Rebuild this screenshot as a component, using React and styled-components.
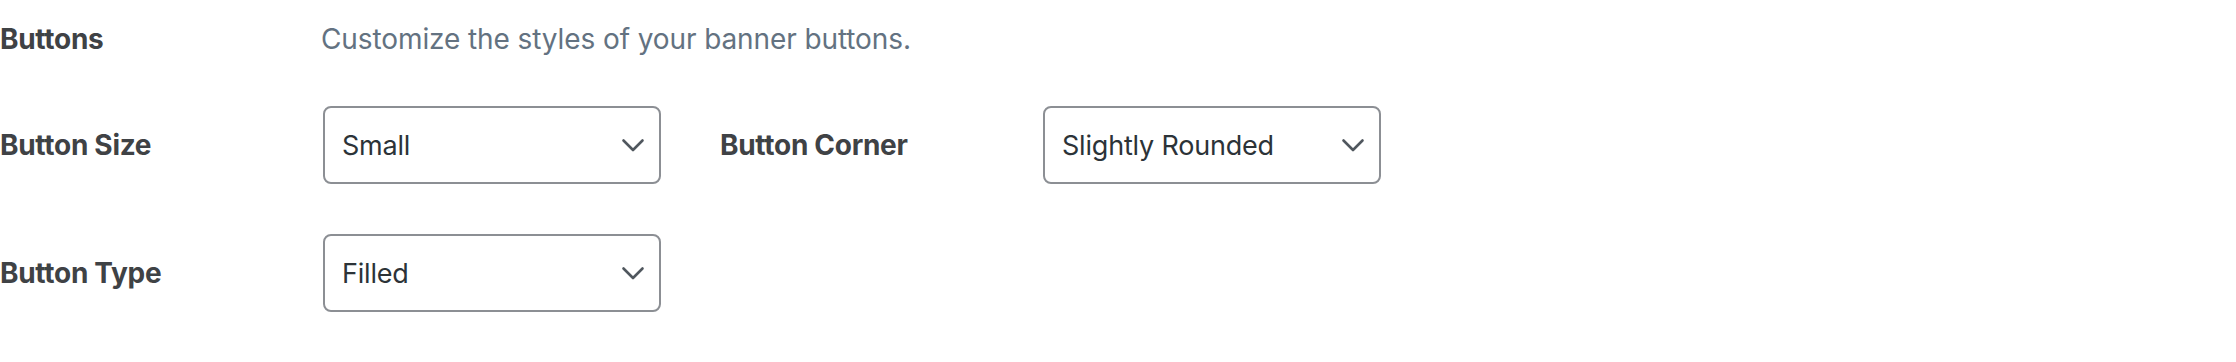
import React from 'react';
import styled, { createGlobalStyle } from 'styled-components';

const GlobalStyle = createGlobalStyle`
    body {
        margin: 0;
        background: #ffffff;
        font-family: Inter, "Noto Sans", "Liberation Sans", sans-serif;
    }
`;

const Section = styled.div`
    display: flex;
    flex-direction: column;
    width: 2236px;
`;

const HeadRow = styled.div`
    display: flex;
    align-items: center;
    height: 78px;
`;

const Row = styled.div`
    display: flex;
    align-items: center;
    gap: 59px;
    margin-top: ${(p) => p.top}px;
`;

const Pair = styled.div`
    display: grid;
    grid-template-columns: 323px 338px;
    align-items: center;
`;

const Label = styled.div`
    font-size: 28px;
    font-weight: 700;
    color: #3f4245;
    width: ${(p) => (p.wide ? '321px' : 'auto')};
    letter-spacing: -0.3px;
`;

const Description = styled.p`
    margin: 0;
    font-size: 28px;
    color: #637281;
    letter-spacing: -0.1px;
`;

const SelectBox = styled.div`
    display: flex;
    align-items: center;
    justify-content: space-between;
    box-sizing: border-box;
    height: 78px;
    padding: 0 14px 0 17px;
    border: 2px solid #8c8f94;
    border-radius: 8px;
    background: #fff;
    font-size: 27px;
    color: #2c3338;
    letter-spacing: -0.2px;
`;

const Chevron = () => (
    <svg width='24' height='14' viewBox='0 0 24 14' fill='none'>
        <path
            d='M2.5 2.5l9.5 9.5 9.5-9.5'
            stroke='#50575e'
            strokeWidth='2.6'
            strokeLinecap='round'
            strokeLinejoin='round'
        />
    </svg>
);

const Select = ({ value }) => (
    <SelectBox>
        <span>{value}</span>
        <Chevron />
    </SelectBox>
);

const App = () => (
    <>
        <GlobalStyle />
        <Section>
            <HeadRow>
                <Label wide>Buttons</Label>
                <Description>Customize the styles of your banner buttons.</Description>
            </HeadRow>
            <Row top={28}>
                <Pair>
                    <Label>Button Size</Label>
                    <Select value='Small' />
                </Pair>
                <Pair>
                    <Label>Button Corner</Label>
                    <Select value='Slightly Rounded' />
                </Pair>
            </Row>
            <Row top={50}>
                <Pair>
                    <Label>Button Type</Label>
                    <Select value='Filled' />
                </Pair>
            </Row>
        </Section>
    </>
);

export default App;
